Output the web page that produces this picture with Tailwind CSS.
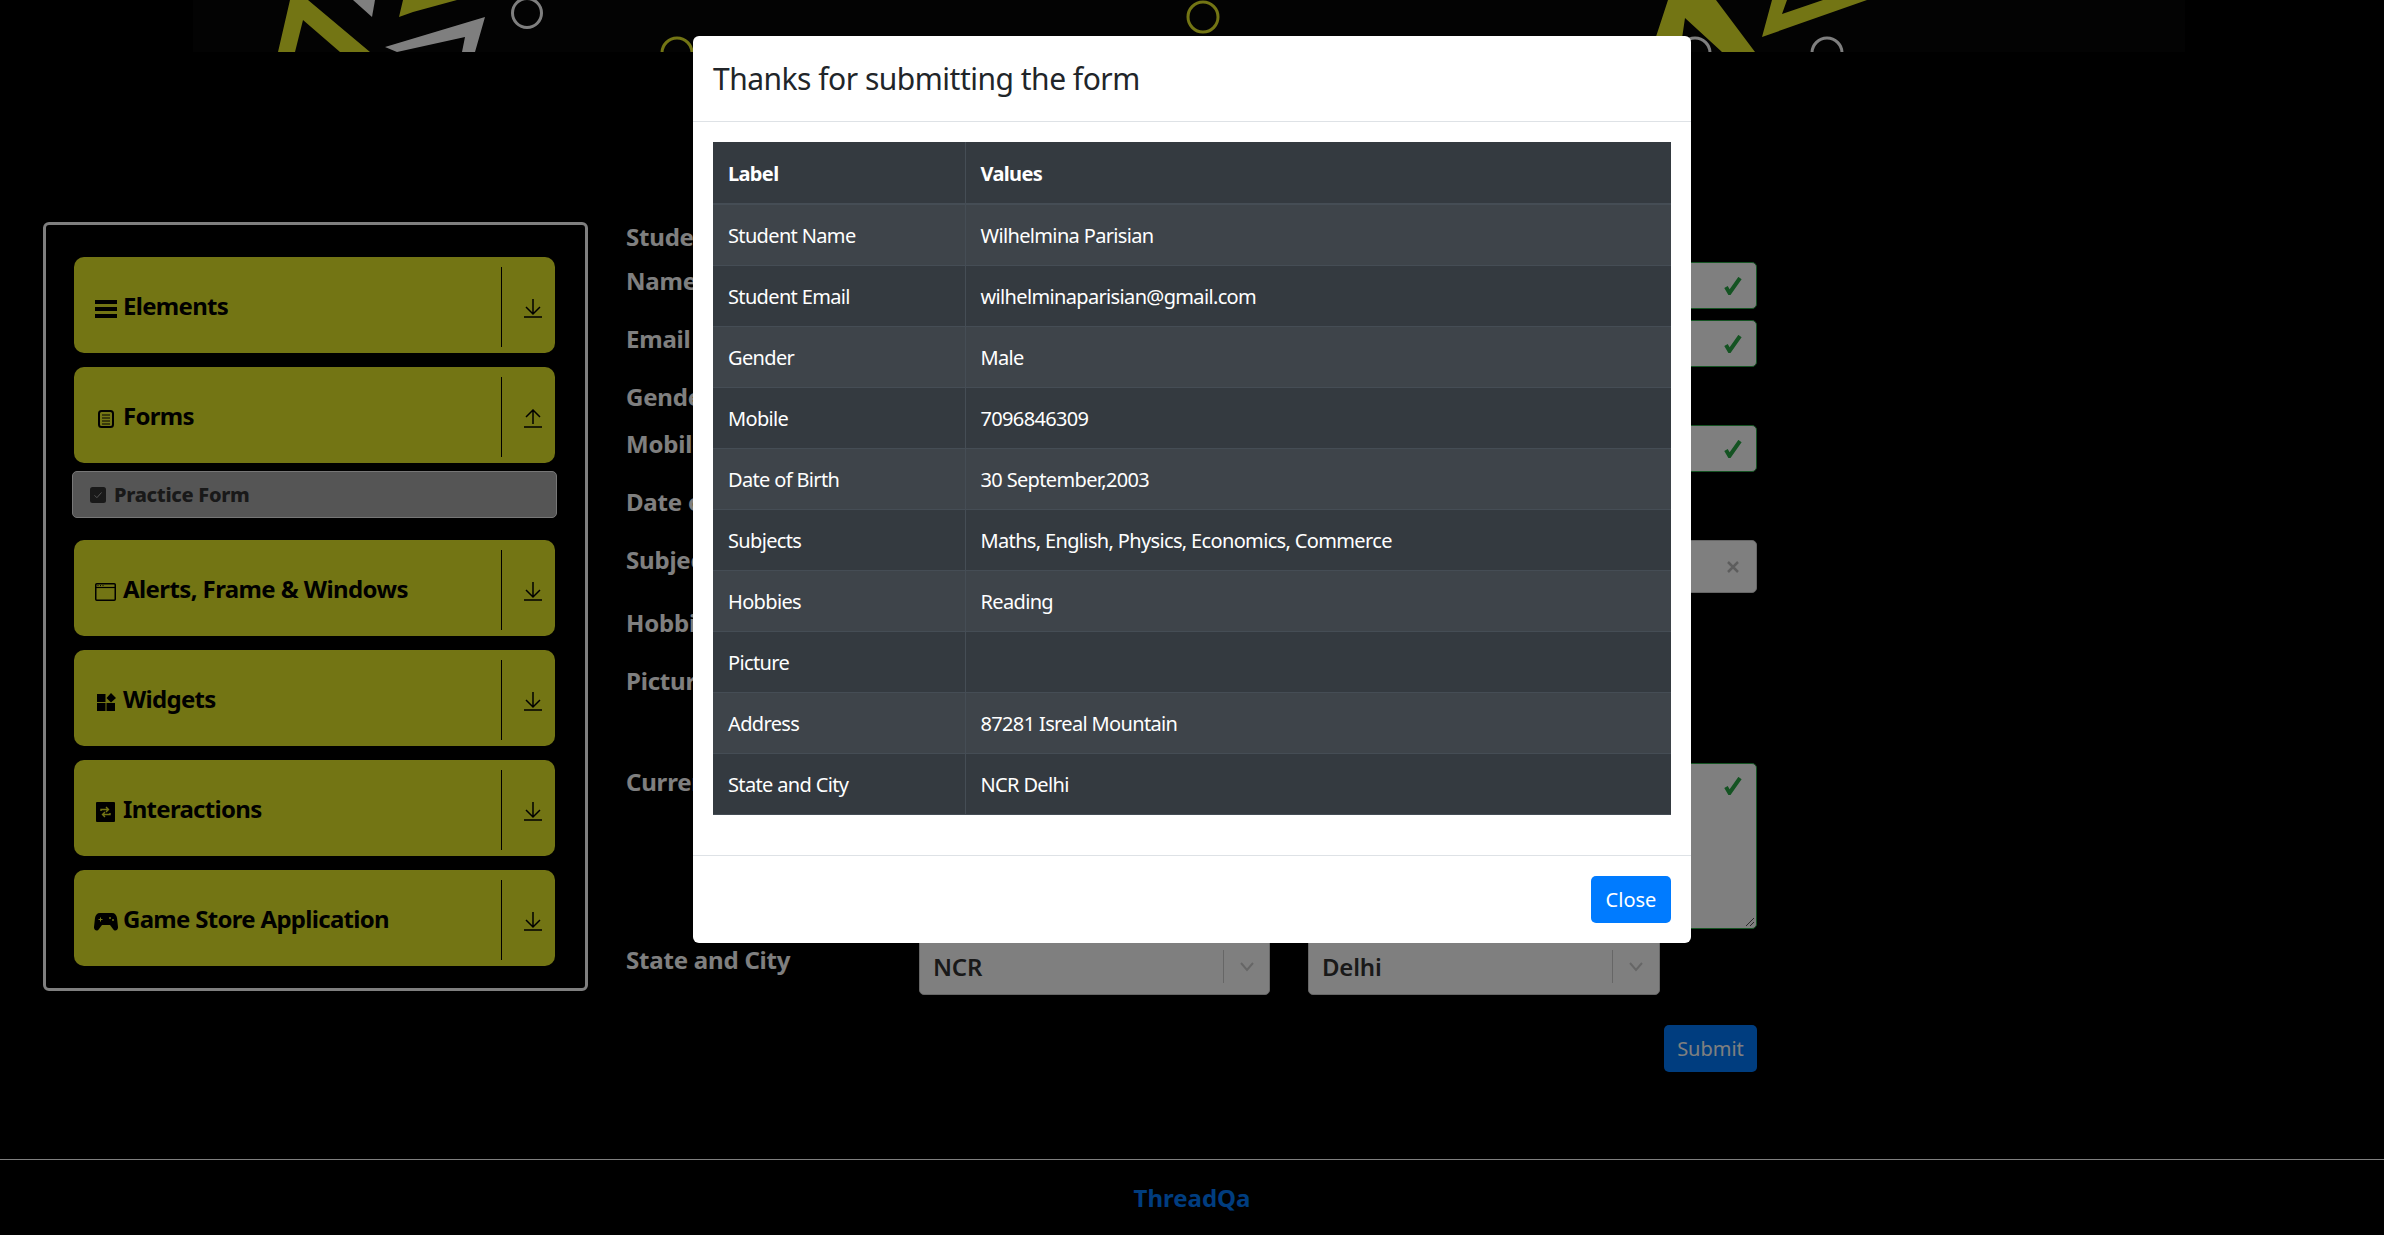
<!DOCTYPE html>
<html lang="en"><head><meta charset="utf-8"><title>ThreadQa</title>
<script src="https://cdn.jsdelivr.net/npm/@tailwindcss/browser@4"></script></head>
<body class="bg-black overflow-hidden h-[1235px] font-['Noto_Sans',sans-serif] text-[20px] leading-[30px]">

<header class="h-[52px] overflow-hidden">
<svg width="2384" height="52" viewBox="0 0 2384 52" class="block">
<rect x="193" width="1992" height="52" fill="#060606"/>
<g fill="#e7ea28"><polygon points="290,0 308,0 370,52 340,52 303,20 295,52 278,52"/><polygon points="403,0 457,0 413,12 399,17"/><polygon points="1668,0 1716,0 1755,52 1722,52 1685,18 1680,52 1651,52"/><polygon points="1762,37 1772,0 1787,0 1782,14 1823,0 1867,0"/></g>
<g fill="#fff"><polygon points="353,0 375,0 372,17"/><polygon points="385,47 485,17 475,52 462,52 465,37 397,52"/></g>
<g fill="none" stroke-width="3"><circle cx="527" cy="13" r="14.5" stroke="#fff"/><circle cx="677" cy="53" r="15" stroke="#e7ea28"/><circle cx="1203" cy="17" r="15" stroke="#e7ea28"/><circle cx="1695" cy="53" r="15" stroke="#fff"/><circle cx="1827" cy="53" r="15" stroke="#fff"/></g>
</svg>
</header>

<main class="flex items-start mt-[170px] pl-[43px]">
<nav class="w-[545px] h-[769px] border-[3px] border-white rounded-[6px] pt-[32px] pl-[28px]">
 <div class="w-[481px] h-[96px] bg-[#e7ea28] rounded-[10px] flex items-center text-black font-bold text-[24px] tracking-[-0.7px]">
  <div class="w-[49px] shrink-0 pl-[21px] pt-[7px]"><svg width="22" height="18" viewBox="0 0 22 18" class="block"><path d="M0 0h22v4H0zM0 7h22v4H0zM0 14h22v4H0z"/></svg></div>
  <span class="flex-1 pt-[2px]">Elements</span><i class="w-[1.5px] h-[80px] mt-[4px] bg-black"></i>
  <div class="w-[53px] pl-[22px] pt-[7px]"><svg width="18" height="19" viewBox="0 0 18 19" fill="none" stroke="#000" stroke-width="1.5" class="block"><path d="M9 0v15M2 8l7 7 7-7M0 18h18"/></svg></div>
 </div>
 <div class="w-[481px] h-[96px] mt-[14px] bg-[#e7ea28] rounded-[10px] flex items-center text-black font-bold text-[24px] tracking-[-0.7px]">
  <div class="w-[49px] shrink-0 pl-[24px] pt-[7px]"><svg width="16" height="18" viewBox="0 0 16 18" fill="none" stroke="#000" class="block"><rect x="1" y="1" width="14" height="16" rx="2.5" stroke-width="2"/><path d="M4 5h8M4 8h8M4 11h8M4 14h8" stroke-width="1"/></svg></div>
  <span class="flex-1 pt-[2px]">Forms</span><i class="w-[1.5px] h-[80px] mt-[4px] bg-black"></i>
  <div class="w-[53px] pl-[22px] pt-[7px]"><svg width="18" height="19" viewBox="0 0 18 19" fill="none" stroke="#000" stroke-width="1.5" class="block"><path d="M9 15V1M2 8l7-7 7 7M0 18h18"/></svg></div>
 </div>
 <div class="w-[485px] h-[47px] -ml-[2px] mt-[8px] bg-[#aaa] border border-[#eee] rounded-[5px] flex items-center text-[#333] font-extrabold text-[20px] tracking-[-0.3px]">
  <svg width="16" height="16" viewBox="0 0 16 16" class="block ml-[17px] mr-[8px]"><rect width="16" height="16" rx="2.5" fill="#333"/><path d="M4.5 8.3l2.4 2.4 4.6-5.2" fill="none" stroke="#aaa" stroke-width="1"/></svg><span>Practice Form</span>
 </div>
 <div class="w-[481px] h-[96px] mt-[22px] bg-[#e7ea28] rounded-[10px] flex items-center text-black font-bold text-[24px] tracking-[-0.6px]">
  <div class="w-[49px] shrink-0 pl-[21px] pt-[7px]"><svg width="21" height="18" viewBox="0 0 21 18" fill="none" stroke="#000" class="block"><rect x=".75" y=".75" width="19.5" height="16.5" rx="1" stroke-width="1.5"/><path d="M1 4.5h19" stroke-width="1.2"/><path d="M2.5 2.6h1M5 2.6h1M7.500 2.600h1" stroke-width="1"/></svg></div>
  <span class="flex-1 pt-[2px]">Alerts, Frame &amp; Windows</span><i class="w-[1.5px] h-[80px] mt-[4px] bg-black"></i>
  <div class="w-[53px] pl-[22px] pt-[7px]"><svg width="18" height="19" viewBox="0 0 18 19" fill="none" stroke="#000" stroke-width="1.5" class="block"><path d="M9 0v15M2 8l7 7 7-7M0 18h18"/></svg></div>
 </div>
 <div class="w-[481px] h-[96px] mt-[14px] bg-[#e7ea28] rounded-[10px] flex items-center text-black font-bold text-[24px] tracking-[-0.7px]">
  <div class="w-[49px] shrink-0 pl-[23px] pt-[7px]"><svg width="19" height="18" viewBox="0 0 19 18" class="block"><path d="M0 1h8.500v8H0zM0 10h8.500v8H0zM9.500 10h8.500v8H9.500zM14 0l5 5-5 4.500-4.500-4.500z"/></svg></div>
  <span class="flex-1 pt-[2px]">Widgets</span><i class="w-[1.5px] h-[80px] mt-[4px] bg-black"></i>
  <div class="w-[53px] pl-[22px] pt-[7px]"><svg width="18" height="19" viewBox="0 0 18 19" fill="none" stroke="#000" stroke-width="1.5" class="block"><path d="M9 0v15M2 8l7 7 7-7M0 18h18"/></svg></div>
 </div>
 <div class="w-[481px] h-[96px] mt-[14px] bg-[#e7ea28] rounded-[10px] flex items-center text-black font-bold text-[24px] tracking-[-0.7px]">
  <div class="w-[49px] shrink-0 pl-[22px] pt-[7px]"><svg width="19" height="20" viewBox="0 0 19 20" class="block"><rect width="19" height="20" rx="1"/><path d="M5 9V7.500h7M10 5l2.500 2.500L10 10M14 11v1.500H7M9 15l-2.500-2.500L9 10" fill="none" stroke="#e7ea28" stroke-width="1.400"/></svg></div>
  <span class="flex-1 pt-[2px]">Interactions</span><i class="w-[1.5px] h-[80px] mt-[4px] bg-black"></i>
  <div class="w-[53px] pl-[22px] pt-[7px]"><svg width="18" height="19" viewBox="0 0 18 19" fill="none" stroke="#000" stroke-width="1.5" class="block"><path d="M9 0v15M2 8l7 7 7-7M0 18h18"/></svg></div>
 </div>
 <div class="w-[481px] h-[96px] mt-[14px] bg-[#e7ea28] rounded-[10px] flex items-center text-black font-bold text-[24px] tracking-[-0.7px]">
  <div class="w-[49px] shrink-0 pl-[20px] pt-[7px]"><svg width="24" height="18" viewBox="0 0 24 18" class="block"><path d="M6 0h12c3 0 4.500 2 5 5l1 9c.3 3-3 5-5 2l-3-4H8l-3 4c-2 3-5.300 1-5-2l1-9c.5-3 2-5 5-5z"/><path d="M4.500 6.500h4M6.500 4.500v4" stroke="#e7ea28" stroke-width="1"/><circle cx="16" cy="5" r="1" fill="#e7ea28"/><circle cx="19" cy="7" r="1" fill="#e7ea28"/></svg></div>
  <span class="flex-1 pt-[2px]">Game Store Application</span><i class="w-[1.5px] h-[80px] mt-[4px] bg-black"></i>
  <div class="w-[53px] pl-[22px] pt-[7px]"><svg width="18" height="19" viewBox="0 0 18 19" fill="none" stroke="#000" stroke-width="1.5" class="block"><path d="M9 0v15M2 8l7 7 7-7M0 18h18"/></svg></div>
 </div>
</nav>

<form class="ml-[38px] w-[1131px] text-white font-bold text-[24px] leading-[36px] tracking-[-0.2px]">
 <div class="h-[40px] -mt-[3px] mb-[3px]">Student Registration Form</div>
 <div class="h-[58px] flex"><label class="w-[293px] pt-[1px]">Name</label><div class="flex-1 h-[47px] bg-white border border-[#28a745] rounded-[5px] flex items-center justify-end pr-[13px]"><svg width="20" height="18" viewBox="0 0 20 18" fill="none" stroke="#28a745" stroke-width="4" class="block"><path d="M3 10l3.500 6L17 1"/></svg></div></div>
 <div class="h-[58px] flex"><label class="w-[293px] pt-[1px]">Email</label><div class="flex-1 h-[47px] bg-white border border-[#28a745] rounded-[5px] flex items-center justify-end pr-[13px]"><svg width="20" height="18" viewBox="0 0 20 18" fill="none" stroke="#28a745" stroke-width="4" class="block"><path d="M3 10l3.500 6L17 1"/></svg></div></div>
 <div class="h-[47px] pt-[1px]">Gender</div>
 <div class="h-[58px] flex"><label class="w-[293px] pt-[1px]">Mobile</label><div class="flex-1 h-[47px] bg-white border border-[#28a745] rounded-[5px] flex items-center justify-end pr-[13px]"><svg width="20" height="18" viewBox="0 0 20 18" fill="none" stroke="#28a745" stroke-width="4" class="block"><path d="M3 10l3.500 6L17 1"/></svg></div></div>
 <div class="h-[57px] pt-[1px]">Date of Birth</div>
 <div class="h-[64px] flex"><label class="w-[293px] pt-[2px]">Subjects</label><div class="flex-1 h-[53px] bg-white border border-[#ccc] rounded-[5px] flex items-center justify-end pr-[17px]"><svg width="12" height="12" viewBox="0 0 12 12" fill="none" stroke="#bbb" stroke-width="2.500" class="block"><path d="M1 1l10 10M11 1L1 11"/></svg></div></div>
 <div class="h-[58px] pt-[1px]">Hobbies</div>
 <div class="h-[100px] pt-[1px]">Picture</div>
 <div class="h-[176px] flex"><label class="w-[293px] pt-[2px]">Current Address</label><div class="relative flex-1 h-[166px] mt-[1px] bg-white border border-[#28a745] rounded-[5px] flex justify-end pr-[13px] pt-[13px]"><svg width="20" height="18" viewBox="0 0 20 18" fill="none" stroke="#28a745" stroke-width="4" class="block"><path d="M3 10l3.500 6L17 1"/></svg><svg width="10" height="10" viewBox="0 0 10 10" fill="none" stroke="#555" class="absolute right-[1px] bottom-[1px]"><path d="M9 1L1 9M9 5L5 9"/></svg></div></div>
 <div class="flex items-start">
  <label class="w-[293px] pt-[4px]">State and City</label>
  <div class="w-[351px] h-[57px] bg-white border border-[#ccc] rounded-[5px] flex items-center text-[#333]"><span class="flex-1 pl-[13px] font-semibold">NCR</span><i class="w-px h-[33px] bg-[#ccc]"></i><div class="w-[45px] flex justify-center"><svg width="14" height="10" viewBox="0 0 14 10" fill="none" stroke="#ccc" stroke-width="2" class="block"><path d="M1 1l6 7 6-7"/></svg></div></div>
  <div class="w-[352px] h-[57px] ml-[38px] bg-white border border-[#ccc] rounded-[5px] flex items-center text-[#333]"><span class="flex-1 pl-[13px] font-semibold">Delhi</span><i class="w-px h-[33px] bg-[#ccc]"></i><div class="w-[46px] flex justify-center"><svg width="14" height="10" viewBox="0 0 14 10" fill="none" stroke="#ccc" stroke-width="2" class="block"><path d="M1 1l6 7 6-7"/></svg></div></div>
 </div>
 <div class="flex justify-end mt-[30px]"><button type="button" class="w-[93px] h-[47px] bg-[#007bff] rounded-[5px] text-white font-normal text-[20px] leading-[30px] tracking-normal">Submit</button></div>
</form>
</main>

<footer class="mt-[87px] border-t border-white h-[76px] flex items-center justify-center text-[#007bff] font-bold text-[24px]">ThreadQa</footer>

<div class="fixed inset-0 bg-black/50 flex justify-center items-start pt-[36px]">
 <section class="w-[998px] h-[907px] bg-white rounded-[6px] text-[#212529]">
  <h5 class="h-[86px] px-[20px] border-b border-[#dee2e6] font-normal text-[30px] leading-[45px] pt-[20px] tracking-[-0.5px]">Thanks for submitting the form</h5>
  <div class="px-[20px] pt-[20px]">
  <table class="w-[958px] table-fixed border-collapse bg-[#343a40] text-white tracking-[-0.65px] [&_td]:pt-[2px] [&_th]:pt-[2px]">
   <colgroup><col class="w-[252px]"><col></colgroup>
   <thead><tr class="h-[62px] border-b-2 border-[#454d55] text-left"><th class="px-[15px] border-r border-[#454d55]">Label</th><th class="px-[15px]">Values</th></tr></thead>
   <tbody>
   <tr class="h-[61px] bg-[#3e444a] border-b border-[#454d55]"><td class="px-[15px] border-r border-[#454d55]">Student Name</td><td class="px-[15px]">Wilhelmina Parisian</td></tr>
   <tr class="h-[61px] border-b border-[#454d55]"><td class="px-[15px] border-r border-[#454d55]">Student Email</td><td class="px-[15px]">wilhelminaparisian@gmail.com</td></tr>
   <tr class="h-[61px] bg-[#3e444a] border-b border-[#454d55]"><td class="px-[15px] border-r border-[#454d55]">Gender</td><td class="px-[15px]">Male</td></tr>
   <tr class="h-[61px] border-b border-[#454d55]"><td class="px-[15px] border-r border-[#454d55]">Mobile</td><td class="px-[15px]">7096846309</td></tr>
   <tr class="h-[61px] bg-[#3e444a] border-b border-[#454d55]"><td class="px-[15px] border-r border-[#454d55]">Date of Birth</td><td class="px-[15px]">30 September,2003</td></tr>
   <tr class="h-[61px] border-b border-[#454d55]"><td class="px-[15px] border-r border-[#454d55]">Subjects</td><td class="px-[15px]">Maths, English, Physics, Economics, Commerce</td></tr>
   <tr class="h-[61px] bg-[#3e444a] border-b border-[#454d55]"><td class="px-[15px] border-r border-[#454d55]">Hobbies</td><td class="px-[15px]">Reading</td></tr>
   <tr class="h-[61px] border-b border-[#454d55]"><td class="px-[15px] border-r border-[#454d55]">Picture</td><td class="px-[15px]"></td></tr>
   <tr class="h-[61px] bg-[#3e444a] border-b border-[#454d55]"><td class="px-[15px] border-r border-[#454d55]">Address</td><td class="px-[15px]">87281 Isreal Mountain</td></tr>
   <tr class="h-[61px] border-b border-[#454d55]"><td class="px-[15px] border-r border-[#454d55]">State and City</td><td class="px-[15px]">NCR Delhi</td></tr>
   </tbody>
  </table>
  </div>
  <div class="mt-[40px] border-t border-[#dee2e6] pt-[20px] pr-[20px] flex justify-end"><button type="button" class="w-[80px] h-[47px] pt-[2px] bg-[#007bff] rounded-[5px] text-white">Close</button></div>
 </section>
</div>
</body></html>
